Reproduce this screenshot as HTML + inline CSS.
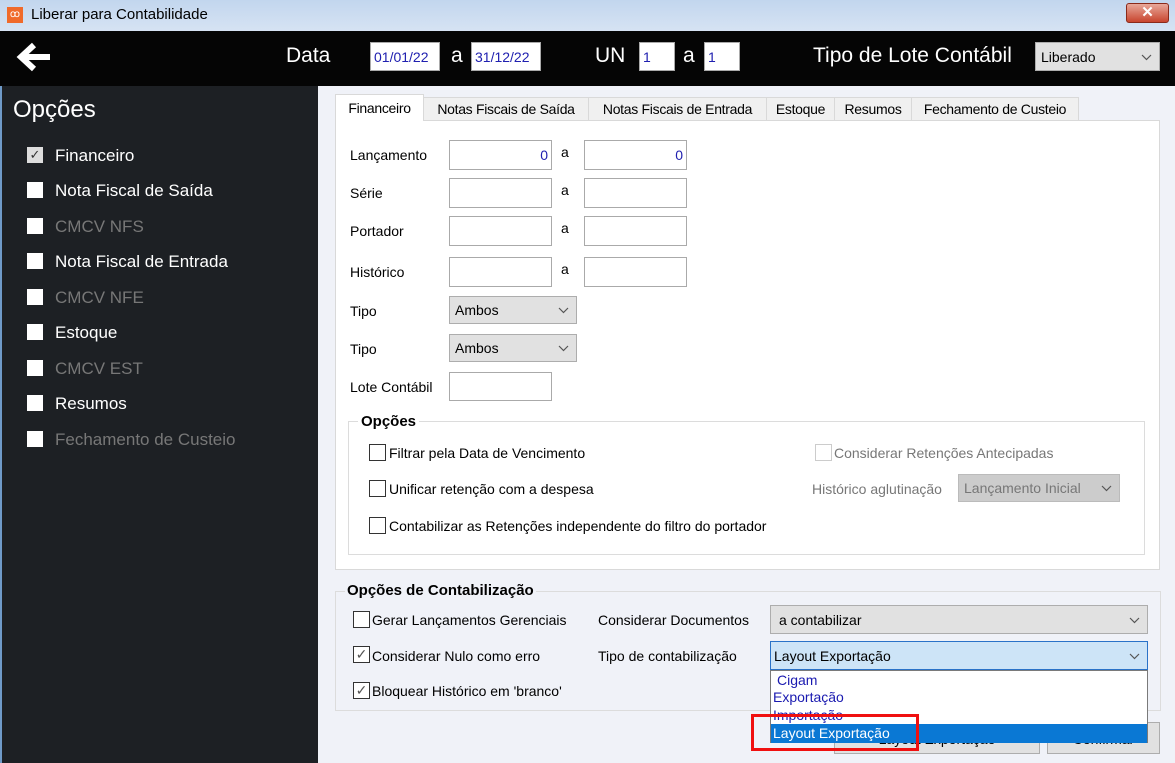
<!DOCTYPE html>
<html><head><meta charset="utf-8"><style>
*{box-sizing:border-box;margin:0;padding:0}
body{width:1175px;height:763px;overflow:hidden;font-family:"Liberation Sans",sans-serif;font-size:14px;color:#000;position:relative;background:#f0f2f8}
.a{position:absolute;white-space:nowrap}
.inp{position:absolute;background:#fff;border:1px solid #aaa}
.cb{position:absolute;width:17px;height:17px;background:#fff;border:1px solid #333}
.sel{position:absolute;background:#e1e1e1;border:1px solid #adadad;padding:5px 5px;font-size:14px}
.chev{position:absolute;right:7px;top:50%;margin-top:-3px;width:11px;height:7px}
.sb{position:absolute;left:27px;width:16px;height:16px;background:#fff}
.st{position:absolute;left:55px;font-size:17px;color:#fff}
.dis{color:#777}
.tab{position:absolute;top:97px;height:24px;border:1px solid #d9d9d9;background:#f0f0f0;font-size:14px;padding:3px 0;text-align:center;letter-spacing:-0.3px}
</style></head><body>
<svg width="0" height="0" style="position:absolute"><defs><symbol id="cv" viewBox="0 0 11 7"><path d="M1 1l4.5 4.5L10 1" stroke="#555" stroke-width="1.2" fill="none"/></symbol></defs></svg>
<div class="a" style="left:0;top:0;width:1175px;height:31px;background:linear-gradient(#c2d6ee,#d6e3f3)"></div>
<div class="a" style="left:7px;top:7px;width:16px;height:16px;background:#f06a2a;color:#fff;font-size:10px;text-align:center;line-height:16px">ꝏ</div>
<div class="a" style="left:31px;top:6px;font-size:15px">Liberar para Contabilidade</div>
<div class="a" style="left:1126px;top:3px;width:43px;height:20px;background:linear-gradient(#e8a89a,#c8452e);border:1px solid #8a2a1a;border-radius:3px;color:#fff;font-weight:bold;text-align:center;font-size:15px;line-height:18px">✕</div>
<div class="a" style="left:0;top:31px;width:1175px;height:55px;background:#050505"></div>
<svg class="a" style="left:14px;top:40px" width="40" height="34" viewBox="0 0 40 34"><path d="M36 17H8M20 5L7 17l13 12" stroke="#fff" stroke-width="6" fill="none"/></svg>
<div class="a" style="left:286px;top:44px;font-size:21px;color:#fff">Data</div>
<div class="inp" style="left:370px;top:42px;width:70px;height:29px;color:#2020b0;padding:6px 3px;font-size:14px">01/01/22</div>
<div class="a" style="left:451px;top:44px;font-size:21px;color:#fff">a</div>
<div class="inp" style="left:471px;top:42px;width:70px;height:29px;color:#2020b0;padding:6px 3px;font-size:14px">31/12/22</div>
<div class="a" style="left:595px;top:44px;font-size:21px;color:#fff">UN</div>
<div class="inp" style="left:639px;top:42px;width:36px;height:29px;color:#2020b0;padding:6px 3px">1</div>
<div class="a" style="left:683px;top:44px;font-size:21px;color:#fff">a</div>
<div class="inp" style="left:704px;top:42px;width:36px;height:29px;color:#2020b0;padding:6px 3px">1</div>
<div class="a" style="left:813px;top:44px;font-size:21px;color:#fff">Tipo de Lote Contábil</div>
<div class="sel" style="left:1035px;top:42px;width:125px;height:29px;padding:6px 5px">Liberado<svg class="chev"><use href="#cv"/></svg></div>
<div class="a" style="left:0;top:86px;width:318px;height:677px;background:#1d2024"></div>
<div class="a" style="left:0;top:86px;width:2px;height:677px;background:#6f9ac8"></div>
<div class="a" style="left:13px;top:96px;font-size:24px;color:#fff">Opções</div>
<div class="sb" style="top:147px;background:#ddd;color:#333;font-size:13px;text-align:center;line-height:16px">✓</div><div class="st" style="top:146px">Financeiro</div>
<div class="sb" style="top:182px"></div><div class="st" style="top:181px">Nota Fiscal de Saída</div>
<div class="sb" style="top:218px"></div><div class="st dis" style="top:217px">CMCV NFS</div>
<div class="sb" style="top:253px"></div><div class="st" style="top:252px">Nota Fiscal de Entrada</div>
<div class="sb" style="top:289px"></div><div class="st dis" style="top:288px">CMCV NFE</div>
<div class="sb" style="top:324px"></div><div class="st" style="top:323px">Estoque</div>
<div class="sb" style="top:360px"></div><div class="st dis" style="top:359px">CMCV EST</div>
<div class="sb" style="top:395px"></div><div class="st" style="top:394px">Resumos</div>
<div class="sb" style="top:431px"></div><div class="st dis" style="top:430px">Fechamento de Custeio</div>
<div class="a" style="left:335px;top:120px;width:825px;height:450px;background:#fff;border:1px solid #d9d9d9"></div>
<div class="tab" style="left:423px;width:166px">Notas Fiscais de Saída</div>
<div class="tab" style="left:588px;width:179px">Notas Fiscais de Entrada</div>
<div class="tab" style="left:766px;width:69px">Estoque</div>
<div class="tab" style="left:834px;width:78px">Resumos</div>
<div class="tab" style="left:911px;width:168px">Fechamento de Custeio</div>
<div class="tab" style="left:335px;top:94px;width:89px;height:27px;background:#fff;border-bottom:none;padding:5px 0">Financeiro</div>
<div class="a" style="left:350px;top:147px">Lançamento</div>
<div class="inp" style="left:449px;top:140px;width:103px;height:30px;text-align:right;color:#2020b0;padding:6px 3px">0</div>
<div class="a" style="left:561px;top:144px">a</div>
<div class="inp" style="left:584px;top:140px;width:103px;height:30px;text-align:right;color:#2020b0;padding:6px 3px">0</div>
<div class="a" style="left:350px;top:185px">Série</div>
<div class="inp" style="left:449px;top:178px;width:103px;height:30px"></div><div class="a" style="left:561px;top:182px">a</div><div class="inp" style="left:584px;top:178px;width:103px;height:30px"></div>
<div class="a" style="left:350px;top:223px">Portador</div>
<div class="inp" style="left:449px;top:216px;width:103px;height:30px"></div><div class="a" style="left:561px;top:220px">a</div><div class="inp" style="left:584px;top:216px;width:103px;height:30px"></div>
<div class="a" style="left:350px;top:264px">Histórico</div>
<div class="inp" style="left:449px;top:257px;width:103px;height:30px"></div><div class="a" style="left:561px;top:261px">a</div><div class="inp" style="left:584px;top:257px;width:103px;height:30px"></div>
<div class="a" style="left:350px;top:303px">Tipo</div>
<div class="sel" style="left:449px;top:296px;width:128px;height:28px">Ambos<svg class="chev"><use href="#cv"/></svg></div>
<div class="a" style="left:350px;top:341px">Tipo</div>
<div class="sel" style="left:449px;top:334px;width:128px;height:28px">Ambos<svg class="chev"><use href="#cv"/></svg></div>
<div class="a" style="left:350px;top:379px">Lote Contábil</div>
<div class="inp" style="left:449px;top:372px;width:103px;height:29px"></div>
<div class="a" style="left:348px;top:421px;width:797px;height:134px;border:1px solid #dcdcdc"></div>
<div class="a" style="left:358px;top:413px;background:#fff;padding:0 3px;font-weight:bold;font-size:15px">Opções</div>
<div class="cb" style="left:369px;top:444px"></div><div class="a" style="left:389px;top:445px">Filtrar pela Data de Vencimento</div>
<div class="cb" style="left:369px;top:480px"></div><div class="a" style="left:389px;top:481px">Unificar retenção com a despesa</div>
<div class="cb" style="left:369px;top:517px"></div><div class="a" style="left:389px;top:518px">Contabilizar as Retenções independente do filtro do portador</div>
<div class="cb" style="left:815px;top:444px;border-color:#ccc"></div><div class="a" style="left:834px;top:445px;color:#777">Considerar Retenções Antecipadas</div>
<div class="a" style="left:812px;top:481px;color:#777">Histórico aglutinação</div>
<div class="sel" style="left:958px;top:474px;width:162px;height:28px;background:#ccc;border-color:#bbb;color:#777">Lançamento Inicial<svg class="chev"><use href="#cv"/></svg></div>
<div class="a" style="left:335px;top:591px;width:826px;height:120px;border:1px solid #dcdcdc"></div>
<div class="a" style="left:345px;top:582px;background:#f0f2f8;padding:0 2px;font-weight:bold;font-size:15px">Opções de Contabilização</div>
<div class="cb" style="left:353px;top:611px"></div><div class="a" style="left:372px;top:612px">Gerar Lançamentos Gerenciais</div>
<div class="cb" style="left:353px;top:646px;font-size:14px;line-height:15px;text-align:center;color:#555">✓</div><div class="a" style="left:372px;top:648px">Considerar Nulo como erro</div>
<div class="cb" style="left:353px;top:682px;font-size:14px;line-height:15px;text-align:center;color:#555">✓</div><div class="a" style="left:372px;top:683px">Bloquear Histórico em 'branco'</div>
<div class="a" style="left:598px;top:612px">Considerar Documentos</div>
<div class="a" style="left:598px;top:648px">Tipo de contabilização</div>
<div class="sel" style="left:770px;top:605px;width:378px;height:29px;padding:6px 8px">a contabilizar<svg class="chev"><use href="#cv"/></svg></div>
<div class="sel" style="left:770px;top:641px;width:378px;height:29px;padding:6px 3px;background:#cde4f7;border-color:#2a72c8">Layout Exportação<svg class="chev"><use href="#cv"/></svg></div>
<div class="a" style="left:834px;top:722px;width:206px;height:32px;background:#e1e1e1;border:1px solid #adadad;text-align:center;padding-top:8px">Layout Exportação</div>
<div class="a" style="left:1047px;top:722px;width:113px;height:32px;background:#e1e1e1;border:1px solid #adadad;text-align:center;padding-top:8px">Confirmar</div>
<div class="a" style="left:770px;top:670px;width:378px;height:73px;background:#fff;border:1px solid #7a7a7a;color:#1a1ab0">
<div class="a" style="left:6px;top:1px">Cigam</div>
<div class="a" style="left:2px;top:18px">Exportação</div>
<div class="a" style="left:2px;top:36px">Importação</div>
<div class="a" style="left:0;top:53px;width:376px;height:19px;background:#0a78d4;color:#fff;padding:1px 2px">Layout Exportação</div>
</div>
<div class="a" style="left:751px;top:714px;width:168px;height:37px;border:3px solid #f01010"></div>
</body></html>
